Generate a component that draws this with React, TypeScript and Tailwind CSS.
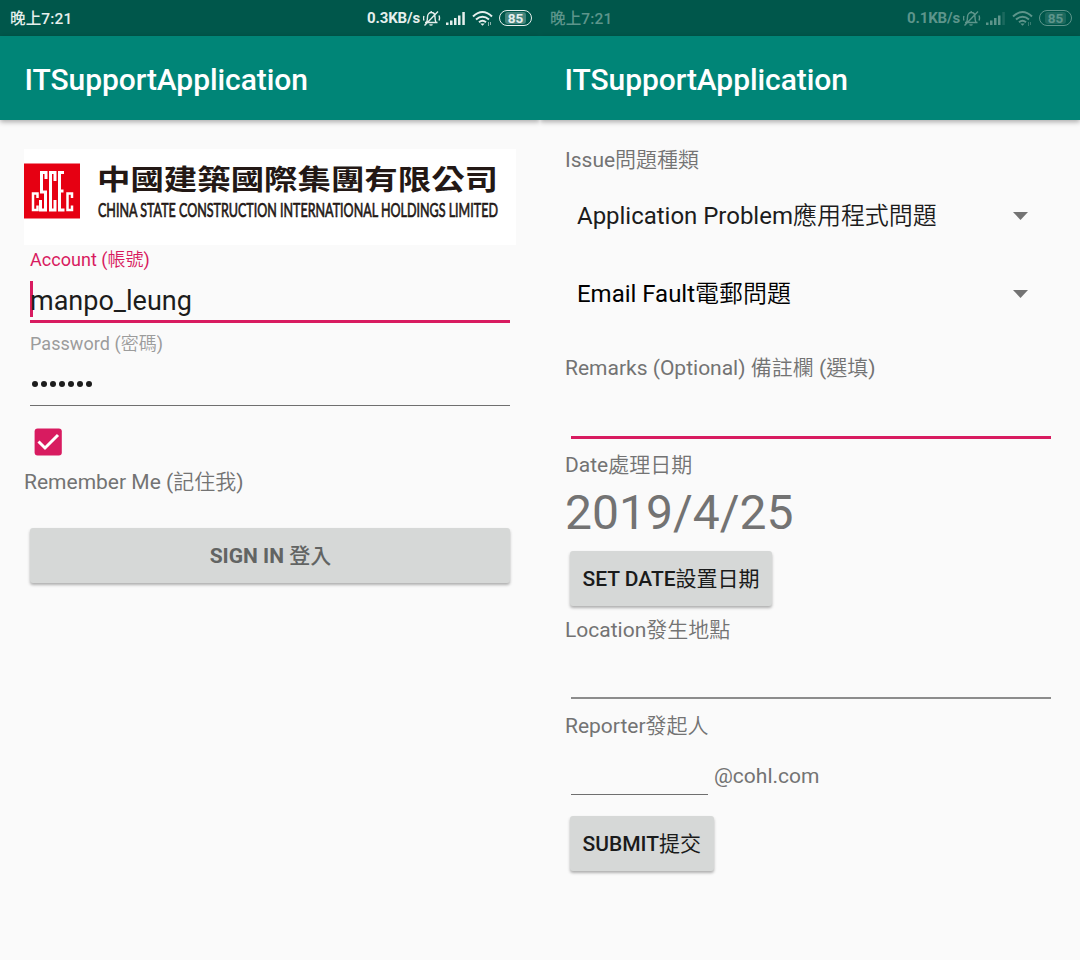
import type { ReactNode } from "react";

function Cjk({ children, className = "font-[350]" }: { children: ReactNode; className?: string }) {
  return <span className={`font-['Noto_Sans_CJK_TC',sans-serif] ${className}`}>{children}</span>;
}

function StatusBar({ speed, className, lastBar }: { speed: string; className: string; lastBar: string }) {
  return (
    <div className="flex h-9 items-center bg-[#00574b] pr-2 pl-[10px] text-[15px] leading-9 font-medium">
      <div className={`flex flex-1 items-center ${className}`}>
        <span className="text-[15.5px] tracking-[0.15px]">
          <Cjk className="font-medium">晚上</Cjk>7:21
        </span>
        <span className="ml-auto font-bold tracking-[-0.15px]">{speed}</span>
        <svg className="ml-[3px] h-[18px] w-[18px]" viewBox="0 0 18 18" fill="none" stroke="currentColor" strokeWidth="1.4">
          <path d="M2 13.500h12.500M3.500 13.500c1-2 1-3 1-5.500 0-6 7.500-6 7.500 0 0 2.500 0 3.500 1 5.500M6.500 15.500q1.500 1.200 3 0M15 2.500L1.500 16.500M1 7q-1 2 0 4.500M16 6.500q1 2.500 0 5M8.200 2v1.500" />
        </svg>
        <svg className="ml-[5px] h-[18px] w-[21px]" viewBox="0 0 21 18" fill="currentColor">
          <path d="M0 13.500h2.500v2.500H0zM4 11.500h2.500v4.500H4zM8 9h2.500v7H8zM12 6.500h2.500v9.500H12z" />
          <path className={lastBar} d="M16.300 3h2.500v13h-2.500z" />
        </svg>
        <svg className="ml-[5px] h-[18px] w-[21px]" viewBox="0 0 21 18" fill="none" stroke="currentColor" strokeWidth="2">
          <path d="M1 7.500Q10.500-1.500 20 7.500M4 10.500q6.500-5.500 13 0M7 13.200q3.500-3 7 0" />
          <path d="M8.300 14.500h4.400l-2.200 2.200z" fill="currentColor" stroke="none" />
          <path d="M16.500 13v4M18.500 13v3" strokeWidth="1" opacity=".6" />
        </svg>
        <div className="relative ml-[6px] flex h-4 w-[33px] items-center justify-center rounded-full border-[1.5px] border-current text-[13.5px] leading-4 font-bold">
          <span className="absolute inset-x-[5px] inset-y-[1px] rounded-[3px] bg-current opacity-30" />
          85
        </div>
      </div>
    </div>
  );
}

function Header({ speed, className, lastBar }: { speed: string; className: string; lastBar: string }) {
  return (
    <header>
      <StatusBar speed={speed} className={className} lastBar={lastBar} />
      <h1 className="flex h-[84px] items-center bg-[#008577] pt-[3px] pl-[24.5px] text-[30px] font-medium tracking-[-0.08px] text-white shadow-[0_2px_5px_rgba(0,0,0,0.32)]">
        ITSupportApplication
      </h1>
    </header>
  );
}

function CompanyLogo() {
  return (
    <svg className="block h-24 w-[492px] bg-white" viewBox="0 0 492 96">
      <rect y="14.500" width="56" height="55" fill="#e60012" />
      <g fill="none" stroke="#fff" strokeWidth="2.500">
        <path d="M13.500 49V44.500H9V61H13.500V56.500" />
        <path d="M22 30V23.500H17.500V43H21.500V61H16.500V51" strokeWidth="3" />
        <path d="M31 32V23.500H26.500V61H31V51" strokeWidth="3" />
        <path d="M40 23.500H35.500V61H40.500M35.500 42H39.500" strokeWidth="3" />
        <path d="M48 49V44.500H43.500V61H48V56.500" />
      </g>
      <text
        transform="translate(73 40.500) scale(1 .86)"
        textLength="401"
        lengthAdjust="spacingAndGlyphs"
        fontSize="33"
        fill="#231815"
        className="font-['Noto_Sans_CJK_TC',sans-serif] font-bold"
      >
        中國建築國際集團有限公司
      </text>
      <text
        transform="translate(74 68) scale(.62 1)"
        textLength="645"
        lengthAdjust="spacingAndGlyphs"
        fontSize="19.500"
        fill="#231815"
        stroke="#231815"
        strokeWidth=".7"
        className="font-['Lato',sans-serif]"
      >
        CHINA STATE CONSTRUCTION INTERNATIONAL HOLDINGS LIMITED
      </text>
    </svg>
  );
}

function Row({ className, children }: { className: string; children: ReactNode }) {
  return <div className={`flex items-center whitespace-nowrap ${className}`}><span>{children}</span></div>;
}

function Spinner({ className, children }: { className: string; children: ReactNode }) {
  return (
    <div className={`flex h-[78px] items-center justify-between pr-[27px] pl-3 text-2xl leading-[36px] tracking-[-0.02px] ${className}`}>
      <span>{children}</span>
      <svg className="mt-px h-2 w-[15px] text-[#737373]" viewBox="0 0 15 8" fill="currentColor">
        <path d="M0 0h15L7.500 8z" />
      </svg>
    </div>
  );
}

const raised = "rounded-[3px] bg-[#d6d8d7] shadow-[0_2px_3px_rgba(0,0,0,0.3)] pb-[2px] leading-[30px] text-[21px]";

function SignIn() {
  return (
    <section className="w-[540px] overflow-hidden">
      <Header speed="0.3KB/s" className="text-[#e6efed]" lastBar="opacity-100" />
      <div className="px-6 pt-[29px]">
        <CompanyLogo />
        <div className="px-[6px]">
          <Row className="h-[27px] text-lg leading-[27px] tracking-[0.03px] text-[#d81b60]">
            Account (<Cjk>帳號</Cjk>)
          </Row>
          <div className="flex h-[51px] items-center border-b-[3px] border-[#d81b60] pt-[6px]">
            <span className="-mr-[3px] h-9 w-[3px] bg-[#d81b60]" />
            <span className="pt-[3px] text-[27px] leading-[36px] text-[#1c1c1c]">manpo_leung</span>
          </div>
          <Row className="h-[39px] text-lg leading-[39px] tracking-[0.06px] text-[#9c9c9c]">
            Password (<Cjk>密碼</Cjk>)
          </Row>
          <div className="flex h-[44px] items-center gap-[3px] border-b-[1.5px] border-[#6f6f6f] pl-[2px]">
            {[0, 1, 2, 3, 4, 5, 6].map((n) => (
              <span key={n} className="size-[6px] rounded-full bg-[#1c1c1c]" />
            ))}
          </div>
        </div>
        <div className="mt-[22px] ml-[10px] flex h-7 w-7 items-center justify-center">
          <svg className="size-7" viewBox="0 0 28 28" fill="none">
            <rect x=".6" y=".5" width="27.200" height="27" rx="3" fill="#d81b60" />
            <path d="M4.500 13.500L11 20L24 7" stroke="#fff" strokeWidth="3" />
          </svg>
        </div>
        <Row className="mt-[6px] h-[38px] text-[21px] leading-[38px] text-[#737373]">
          Remember Me (<Cjk>記住我</Cjk>)
        </Row>
        <button className={`mx-[6px] mt-[28px] block h-[55px] w-[480px] pl-px font-bold text-[#626463] ${raised}`}>
          SIGN IN <Cjk className="font-medium">登入</Cjk>
        </button>
      </div>
    </section>
  );
}

function IssueForm() {
  return (
    <section className="w-[540px] overflow-hidden">
      <Header speed="0.1KB/s" className="text-[#5d958b]" lastBar="opacity-30" />
      <div className="px-[25px] pt-[21px] text-[21px] leading-9 text-[#737373]">
        <Row className="h-9">Issue<Cjk>問題種類</Cjk></Row>
        <Spinner className="-mt-px text-[#1c1c1c]">Application Problem<Cjk>應用程式問題</Cjk></Spinner>
        <Spinner className="text-black">Email Fault<Cjk>電郵問題</Cjk></Spinner>
        <Row className="mt-[17px] h-9">Remarks (Optional) <Cjk>備註欄</Cjk> (<Cjk>選填</Cjk>)</Row>
        <div className="mx-[6px] h-[54px] w-[480px] border-b-[3px] border-[#d81b60]" />
        <Row className="mt-[7px] h-9">Date<Cjk>處理日期</Cjk></Row>
        <Row className="h-[61px] text-5xl leading-[61px]">2019/4/25</Row>
        <button className={`mx-[5px] mt-[8px] block h-[55px] w-[202px] font-medium text-[#1a1b1b] ${raised}`}>
          SET DATE<Cjk className="font-normal">設置日期</Cjk>
        </button>
        <Row className="mt-[5px] h-9">Location<Cjk>發生地點</Cjk></Row>
        <div className="mx-[6px] h-[52px] w-[480px] border-b-2 border-[#8c8c8c]" />
        <Row className="mt-[8px] h-9">Reporter<Cjk>發起人</Cjk></Row>
        <div className="flex h-[52px] pl-[6px]">
          <div className="w-[137px] border-b border-[#6f6f6f]" />
          <span className="ml-[6px] pt-[15px]">@cohl.com</span>
        </div>
        <button className={`mx-[5px] mt-[21px] block h-[55px] w-[143.5px] font-medium text-[#1a1b1b] ${raised}`}>
          SUBMIT<Cjk className="font-normal">提交</Cjk>
        </button>
      </div>
    </section>
  );
}

export default function App() {
  return (
    <main className="flex h-[960px] w-[1080px] overflow-hidden bg-[#fafafa] font-['Roboto','Noto_Sans_CJK_TC',sans-serif]">
      <SignIn />
      <IssueForm />
    </main>
  );
}
